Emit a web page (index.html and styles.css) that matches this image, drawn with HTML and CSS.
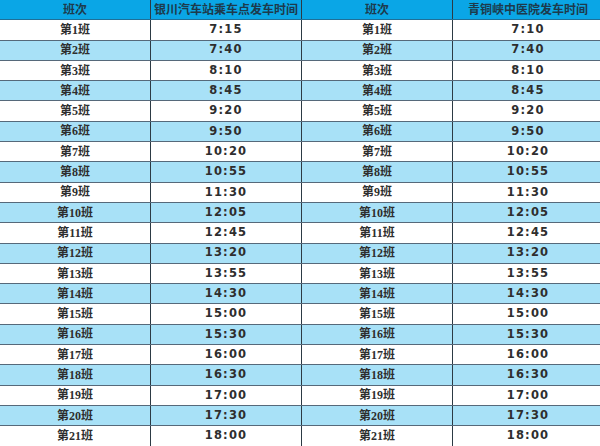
FILE: index.html
```html
<!DOCTYPE html>
<html lang="zh">
<head>
<meta charset="utf-8">
<link rel="stylesheet" href="styles.css">
</head>
<body>
<table class="schedule">
  <thead>
    <tr><th>班次</th><th>银川汽车站乘车点发车时间</th><th>班次</th><th>青铜峡中医院发车时间</th></tr>
  </thead>
  <tbody>
    <tr><td>第1班</td><td class="t">7:15</td><td>第1班</td><td class="t">7:10</td></tr>
    <tr><td>第2班</td><td class="t">7:40</td><td>第2班</td><td class="t">7:40</td></tr>
    <tr><td>第3班</td><td class="t">8:10</td><td>第3班</td><td class="t">8:10</td></tr>
    <tr><td>第4班</td><td class="t">8:45</td><td>第4班</td><td class="t">8:45</td></tr>
    <tr><td>第5班</td><td class="t">9:20</td><td>第5班</td><td class="t">9:20</td></tr>
    <tr><td>第6班</td><td class="t">9:50</td><td>第6班</td><td class="t">9:50</td></tr>
    <tr><td>第7班</td><td class="t">10:20</td><td>第7班</td><td class="t">10:20</td></tr>
    <tr><td>第8班</td><td class="t">10:55</td><td>第8班</td><td class="t">10:55</td></tr>
    <tr><td>第9班</td><td class="t">11:30</td><td>第9班</td><td class="t">11:30</td></tr>
    <tr><td>第10班</td><td class="t">12:05</td><td>第10班</td><td class="t">12:05</td></tr>
    <tr><td>第11班</td><td class="t">12:45</td><td>第11班</td><td class="t">12:45</td></tr>
    <tr><td>第12班</td><td class="t">13:20</td><td>第12班</td><td class="t">13:20</td></tr>
    <tr><td>第13班</td><td class="t">13:55</td><td>第13班</td><td class="t">13:55</td></tr>
    <tr><td>第14班</td><td class="t">14:30</td><td>第14班</td><td class="t">14:30</td></tr>
    <tr><td>第15班</td><td class="t">15:00</td><td>第15班</td><td class="t">15:00</td></tr>
    <tr><td>第16班</td><td class="t">15:30</td><td>第16班</td><td class="t">15:30</td></tr>
    <tr><td>第17班</td><td class="t">16:00</td><td>第17班</td><td class="t">16:00</td></tr>
    <tr><td>第18班</td><td class="t">16:30</td><td>第18班</td><td class="t">16:30</td></tr>
    <tr><td>第19班</td><td class="t">17:00</td><td>第19班</td><td class="t">17:00</td></tr>
    <tr><td>第20班</td><td class="t">17:30</td><td>第20班</td><td class="t">17:30</td></tr>
    <tr><td>第21班</td><td class="t">18:00</td><td>第21班</td><td class="t">18:00</td></tr>
  </tbody>
</table>
</body>
</html>
```
FILE: styles.css
```css
html, body {
  margin: 0;
  padding: 0;
  background: #ffffff;
  overflow: hidden;
}
.schedule {
  width: 600px;
  table-layout: fixed;
  border-collapse: collapse;
  font-family: "Liberation Serif", "Noto Sans CJK SC", serif;
  font-weight: 700;
  font-size: 12px;
  color: #2e2e2e;
}
.schedule th,
.schedule td {
  width: 150px;
  height: 19.3px;
  padding: 0;
  text-align: center;
  vertical-align: middle;
  line-height: 1;
  border-bottom: 1px solid #56697a;
  border-left: 1px solid #2c3a44;
}
.schedule th:first-child,
.schedule td:first-child {
  border-left: none;
}
.schedule th {
  background: #0aa6e6;
  color: #1d3a4c;
  font-weight: 700;
  border-bottom-color: #1f6f97;
}
.schedule tbody tr:nth-child(even) td {
  background: #a8e1f7;
}
.schedule td.t {
  font-family: "DejaVu Sans", sans-serif;
  font-size: 11.5px;
  letter-spacing: 1.2px;
}
```
